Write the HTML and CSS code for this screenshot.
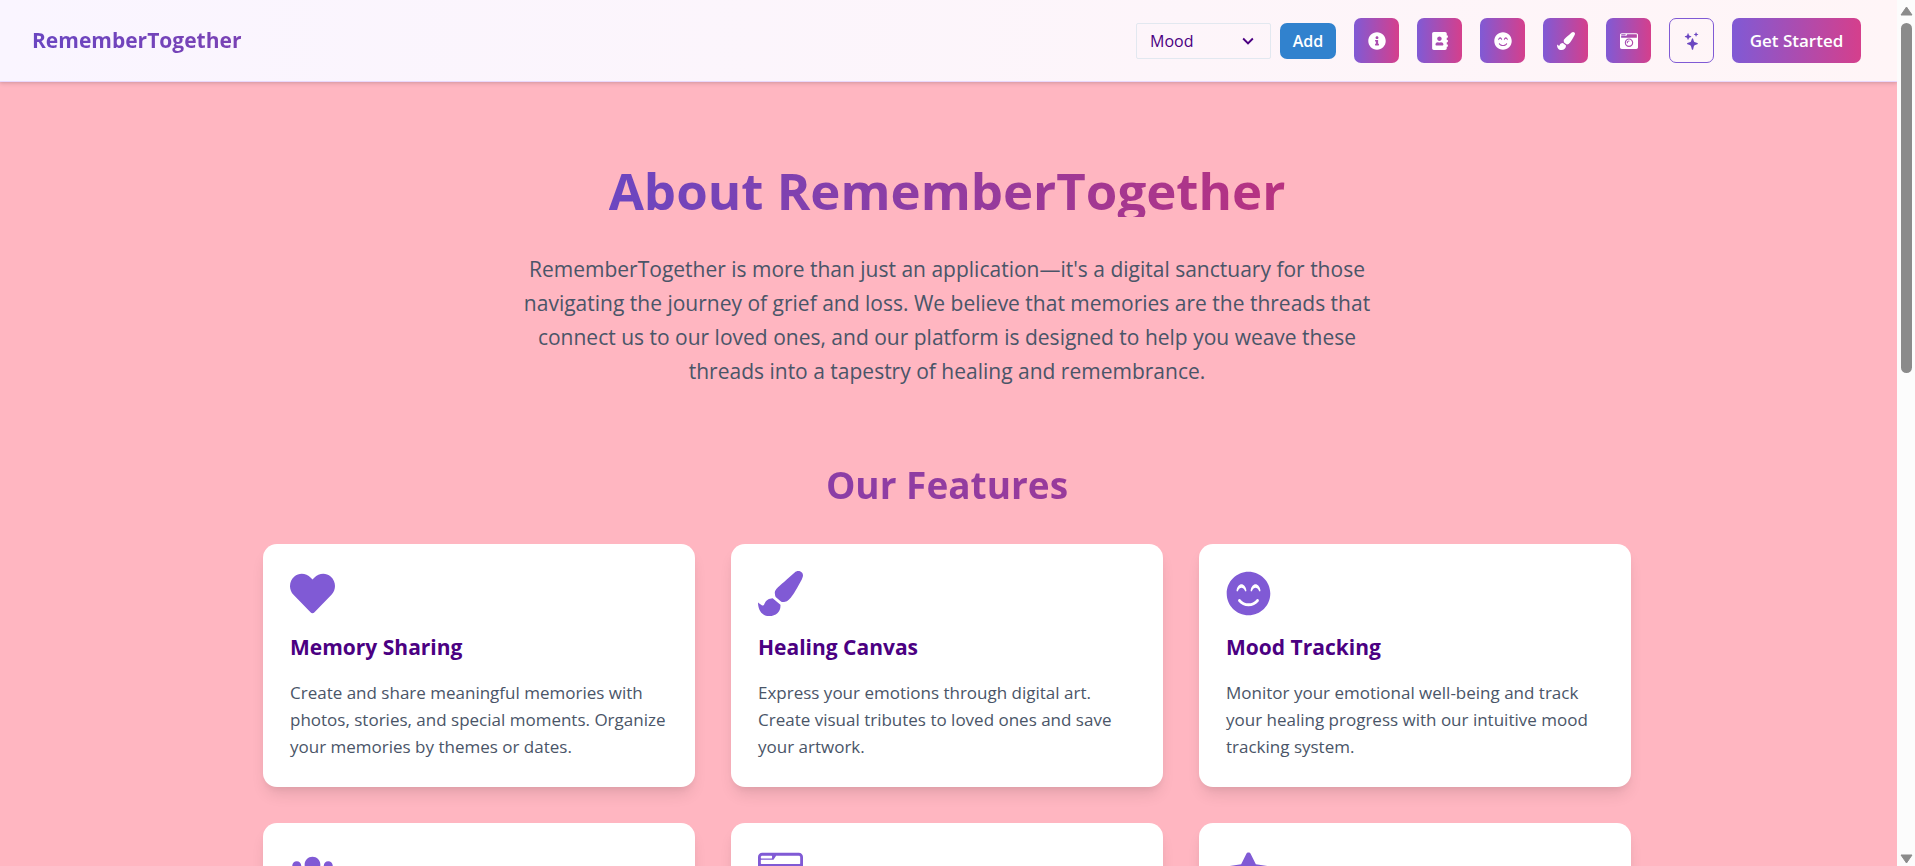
FILE: index.html
```html
<!DOCTYPE html>
<html lang="en">
<head>
<meta charset="utf-8">
<meta name="viewport" content="width=device-width, initial-scale=1">
<title>About RememberTogether</title>
<link rel="stylesheet" href="styles.css">
</head>
<body>
<svg class="sprite" aria-hidden="true">
  <symbol id="info" viewBox="0 0 512 512"><path d="M256 8C119.043 8 8 119.083 8 256c0 136.997 111.043 248 248 248s248-111.003 248-248C504 119.083 392.957 8 256 8zm0 110c23.196 0 42 18.804 42 42s-18.804 42-42 42-42-18.804-42-42 18.804-42 42-42zm56 254c0 6.627-5.373 12-12 12h-88c-6.627 0-12-5.373-12-12v-24c0-6.627 5.373-12 12-12h12v-64h-12c-6.627 0-12-5.373-12-12v-24c0-6.627 5.373-12 12-12h64c6.627 0 12 5.373 12 12v100h12c6.627 0 12 5.373 12 12v24z"/></symbol>
  <symbol id="contacts" viewBox="0 0 448 512"><path d="M436 160c6.6 0 12-5.4 12-12v-40c0-6.6-5.4-12-12-12h-20V48c0-26.5-21.5-48-48-48H48C21.5 0 0 21.5 0 48v416c0 26.5 21.5 48 48 48h320c26.5 0 48-21.5 48-48v-48h20c6.6 0 12-5.4 12-12v-40c0-6.6-5.4-12-12-12h-20v-64h20c6.6 0 12-5.4 12-12v-40c0-6.6-5.4-12-12-12h-20v-64h20zm-228-32c35.3 0 64 28.7 64 64s-28.7 64-64 64-64-28.7-64-64 28.7-64 64-64zm112 236.8c0 10.6-10 19.2-22.4 19.2H118.4C106 384 96 375.4 96 364.8v-19.2c0-31.8 30.1-57.6 67.2-57.6h5c12.3 5.1 25.7 8 39.8 8s27.6-2.9 39.8-8h5c37.1 0 67.2 25.8 67.2 57.6v19.2z"/></symbol>
  <symbol id="smile" viewBox="0 0 496 512"><path d="M248 8C111 8 0 119 0 256s111 248 248 248 248-111 248-248S385 8 248 8zM112 223.4c3.3-42.1 32.2-71.4 56-71.4s52.7 29.3 56 71.4c.7 8.6-10.8 11.9-14.9 4.5l-9.5-17c-7.7-13.7-19.2-21.6-31.5-21.6s-23.8 7.9-31.5 21.6l-9.5 17c-4.3 7.4-15.8 4-15.1-4.5zm250.8 122.8C334.3 380.4 292.5 400 248 400s-86.3-19.6-114.8-53.8c-13.6-16.3 11-36.7 24.6-20.5 22.4 26.9 55.2 42.2 90.2 42.2s67.8-15.4 90.2-42.2c13.4-16.2 38.1 4.2 24.6 20.5zm6.2-118.3l-9.5-17c-7.7-13.7-19.2-21.6-31.5-21.6s-23.8 7.9-31.5 21.6l-9.5 17c-4.1 7.3-15.6 4-14.9-4.5 3.3-42.1 32.2-71.4 56-71.4s52.7 29.3 56 71.4c.6 8.6-11 11.9-15.1 4.5z"/></symbol>
  <symbol id="brush" viewBox="0 0 512 512"><path d="M167.02 309.34c-40.12 2.58-76.53 17.86-97.19 72.3-2.35 6.21-8 9.98-14.59 9.98-11.11 0-45.46-27.67-55.25-34.35C0 439.62 37.93 512 128 512c75.86 0 128-43.77 128-120.19 0-3.11-.65-6.08-.97-9.13l-88.01-73.34zM457.89 0c-15.16 0-29.37 6.71-40.21 16.45C213.27 199.05 192 203.34 192 257.09c0 13.7 3.25 26.76 8.73 38.7l63.82 53.18c7.21 1.8 14.64 3.03 22.39 3.03 62.11 0 98.11-45.47 211.16-256.46 7.38-14.35 13.9-29.85 13.9-45.99C512 20.64 486 0 457.89 0z"/></symbol>
  <symbol id="camera" viewBox="0 0 512 512"><path d="M48 32C21.5 32 0 53.5 0 80v352c0 26.5 21.5 48 48 48h416c26.5 0 48-21.5 48-48V80c0-26.5-21.5-48-48-48H48zm0 32h106c3.3 0 6 2.7 6 6v20c0 3.3-2.7 6-6 6H38c-3.3 0-6-2.7-6-6V80c0-8.8 7.2-16 16-16zm426 96H38c-3.3 0-6-2.7-6-6v-36c0-3.3 2.7-6 6-6h138l30.2-45.3c1.1-1.7 3-2.7 5-2.7H464c8.8 0 16 7.2 16 16v74c0 3.3-2.7 6-6 6zM256 424c-66.2 0-120-53.8-120-120s53.8-120 120-120 120 53.8 120 120-53.8 120-120 120zm0-208c-48.5 0-88 39.5-88 88s39.5 88 88 88 88-39.5 88-88-39.5-88-88-88zm-48 104c-8.8 0-16-7.2-16-16 0-35.3 28.7-64 64-64 8.8 0 16 7.2 16 16s-7.2 16-16 16c-17.6 0-32 14.4-32 32 0 8.8-7.2 16-16 16z"/></symbol>
  <symbol id="sparkles" viewBox="0 0 18 18"><path d="M9.500 6.200c.3 0 .5.200.6.500l.7 2.200c.2.700.7 1.200 1.400 1.400l2.200.8c.6.200.6 1 0 1.200l-2.200.8c-.7.200-1.200.7-1.400 1.400l-.7 2.900c-.2.600-1 .6-1.200 0l-.8-2.900c-.2-.7-.7-1.200-1.400-1.400l-2.200-.8c-.6-.2-.6-1 0-1.200l2.200-.8c.7-.2 1.200-.7 1.400-1.400l.8-2.200c.1-.3.3-.5.600-.5zM5 1.200c.2 0 .3.100.4.300l.5 1.400c.1.400.4.700.8.800l1.400.5c.3.100.3.600 0 .7l-1.400.5c-.4.100-.7.400-.8.800l-.5 1.400c-.1.300-.6.300-.7 0l-.5-1.400c-.1-.4-.4-.7-.8-.8L2 4.900c-.3-.1-.3-.6 0-.7l1.400-.5c.4-.1.7-.4.800-.8l.5-1.400c0-.2.100-.3.300-.3zM13 .2c.1 0 .2.100.3.200l.3.900c.1.300.3.500.6.600l.9.300c.2.100.2.400 0 .5l-.9.300c-.3.100-.5.300-.6.600l-.3.900c-.1.200-.4.200-.5 0l-.3-.9c-.1-.3-.3-.5-.6-.6l-.9-.3c-.2-.1-.2-.4 0-.5l.9-.3c.3-.1.500-.3.600-.6l.3-.9c0-.1.100-.2.200-.2z"/></symbol>
  <symbol id="heart" viewBox="0 0 512 512"><path d="M462.3 62.6C407.5 15.9 326 24.3 275.7 76.2L256 96.5l-19.7-20.3C186.1 24.3 104.5 15.9 49.7 62.6c-62.8 53.6-66.1 149.8-9.9 207.9l193.5 199.8c12.5 12.9 32.8 12.9 45.3 0l193.5-199.8c56.3-58.1 53-154.3-9.8-207.9z"/></symbol>
  <symbol id="users" viewBox="0 0 640 512"><path d="M96 224c35.3 0 64-28.7 64-64s-28.7-64-64-64-64 28.7-64 64 28.7 64 64 64zm448 0c35.3 0 64-28.7 64-64s-28.7-64-64-64-64 28.7-64 64 28.7 64 64 64zm32 32h-64c-17.6 0-33.5 7.1-45.1 18.6 40.3 22.1 68.9 62 75.1 109.4h66c17.7 0 32-14.3 32-32v-32c0-35.3-28.7-64-64-64zm-256 0c61.9 0 112-50.1 112-112S381.9 32 320 32 208 82.1 208 144s50.1 112 112 112zm76.8 32h-8.3c-20.8 10-43.9 16-68.5 16s-47.6-6-68.5-16h-8.3C179.6 288 128 339.6 128 403.2V432c0 26.5 21.5 48 48 48h288c26.5 0 48-21.5 48-48v-28.8c0-63.6-51.6-115.2-115.2-115.2zm-223.7-13.4C161.5 263.1 145.6 256 128 256H64c-35.3 0-64 28.7-64 64v32c0 17.7 14.3 32 32 32h65.9c6.3-47.4 34.9-87.3 75.2-109.4z"/></symbol>
  <symbol id="star" viewBox="0 0 576 512"><path d="M259.3 17.8L194 150.2 47.900 171.500c-26.200 3.800-36.700 36.100-17.700 54.600l105.700 103-25 145.500c-4.500 26.300 23.200 46 46.400 33.700L288 439.600l130.700 68.700c23.200 12.200 50.900-7.400 46.400-33.700l-25-145.500 105.700-103c19-18.500 8.500-50.800-17.700-54.600L382 150.200 316.700 17.800c-11.700-23.600-45.600-23.900-57.400 0z"/></symbol>
</svg>

<div class="shell">
  <div class="page">
    <header class="topbar">
      <a class="brand" href="#">RememberTogether</a>
      <nav class="actions" aria-label="Main">
        <form class="mood">
          <div class="picker">
            <select class="picker-field" aria-label="Mood">
              <option>Mood</option>
            </select>
            <svg class="picker-arrow" viewBox="0 0 24 24" aria-hidden="true"><path d="M16.59 8.590L12 13.170 7.410 8.590 6 10l6 6 6-6z"/></svg>
          </div>
          <button class="add" type="button">Add</button>
        </form>
        <button class="tool" type="button" aria-label="About"><svg class="icon"><use href="#info"/></svg></button>
        <button class="tool" type="button" aria-label="Contacts"><svg class="icon"><use href="#contacts"/></svg></button>
        <button class="tool" type="button" aria-label="Mood tracking"><svg class="icon"><use href="#smile"/></svg></button>
        <button class="tool" type="button" aria-label="Canvas"><svg class="icon"><use href="#brush"/></svg></button>
        <button class="tool" type="button" aria-label="Photos"><svg class="icon"><use href="#camera"/></svg></button>
        <button class="tool tool-outline" type="button" aria-label="Sparkles"><svg class="icon"><use href="#sparkles"/></svg></button>
        <button class="start" type="button">Get Started</button>
      </nav>
    </header>

    <main class="content">
      <section class="intro">
        <h1 class="title">About RememberTogether</h1>
        <p class="lead">RememberTogether is more than just an application—it's a digital sanctuary for those navigating the journey of grief and loss. We believe that memories are the threads that connect us to our loved ones, and our platform is designed to help you weave these threads into a tapestry of healing and remembrance.</p>
      </section>
      <section class="features">
        <h2 class="subtitle">Our Features</h2>
        <div class="cards">
          <article class="card">
            <svg class="card-icon" aria-hidden="true"><use href="#heart"/></svg>
            <h3 class="card-title">Memory Sharing</h3>
            <p class="card-text">Create and share meaningful memories with photos, stories, and special moments. Organize your memories by themes or dates.</p>
          </article>
          <article class="card">
            <svg class="card-icon" aria-hidden="true"><use href="#brush"/></svg>
            <h3 class="card-title">Healing Canvas</h3>
            <p class="card-text">Express your emotions through digital art. Create visual tributes to loved ones and save your artwork.</p>
          </article>
          <article class="card">
            <svg class="card-icon" aria-hidden="true"><use href="#smile"/></svg>
            <h3 class="card-title">Mood Tracking</h3>
            <p class="card-text">Monitor your emotional well-being and track your healing progress with our intuitive mood tracking system.</p>
          </article>
          <article class="card"><svg class="card-icon" aria-hidden="true"><use href="#users"/></svg></article>
          <article class="card"><svg class="card-icon" aria-hidden="true"><use href="#camera"/></svg></article>
          <article class="card"><svg class="card-icon" aria-hidden="true"><use href="#star"/></svg></article>
        </div>
      </section>
    </main>
  </div>
  <div class="scrollbar" aria-hidden="true">
    <svg class="scroll-arrow" viewBox="0 0 13 10"><path d="M6.500 1 12 9H1z"/></svg>
    <div class="scroll-track"><div class="scroll-thumb"></div></div>
    <svg class="scroll-arrow" viewBox="0 0 13 10"><path d="M6.500 9 12 1H1z"/></svg>
  </div>
</div>
</body>
</html>
```

FILE: styles.css
```css
*,
*::before,
*::after {
  box-sizing: border-box;
}

body {
  margin: 0;
  background: #ffb6c1;
  color: #4a5568;
  font-family: "Open Sans", "Noto Sans", sans-serif;
  font-size: 17px;
  line-height: 27px;
}

h1, h2, h3, p {
  margin: 0;
}

button, select {
  font-family: inherit;
}

.sprite {
  display: none;
}

.shell {
  display: flex;
  height: 100vh;
  overflow: hidden;
}

.page {
  flex: 1;
  min-width: 0;
  overflow: hidden;
}

/* Top bar */
.topbar {
  display: flex;
  align-items: center;
  gap: 18px;
  padding: 18px 36px 18px 32px;
  background: linear-gradient(to right, #faf5ff, #fff5f7);
  border-bottom: 1px solid #e9d8fd;
  box-shadow: 0 2px 4px rgba(0, 0, 0, 0.1), 0 1px 2px rgba(0, 0, 0, 0.06);
}

.brand {
  flex: 1;
  background: linear-gradient(to right, #6b46c1, #b83280);
  -webkit-background-clip: text;
  background-clip: text;
  color: transparent;
  font-size: 21px;
  font-weight: 700;
  text-decoration: none;
}

.actions,
.mood {
  display: flex;
  align-items: center;
}

.actions {
  gap: 18px;
}

.mood {
  gap: 9px;
}

.picker {
  position: relative;
  width: 135px;
}

.picker-field {
  display: block;
  width: 100%;
  height: 36px;
  padding: 0 36px 0 13px;
  appearance: none;
  background: transparent;
  border: 1px solid #e2e8f0;
  border-radius: 2px;
  color: #4b0082;
  font-size: 16px;
}

.picker-arrow {
  position: absolute;
  top: 7px;
  right: 12px;
  width: 22px;
  height: 22px;
  fill: #4b0082;
  pointer-events: none;
}

.add,
.tool,
.start {
  display: flex;
  align-items: center;
  justify-content: center;
  padding: 0;
  border: 0;
  border-radius: 7px;
  color: #fff;
  font-weight: 600;
}

.add {
  width: 56px;
  height: 36px;
  background: #3182ce;
  font-size: 16px;
}

.tool,
.start {
  height: 45px;
  background: linear-gradient(to right, #805ad5, #d53f8c);
}

.tool {
  width: 45px;
}

.tool-outline {
  background: transparent;
  border: 1px solid #805ad5;
  color: #6b46c1;
}

.start {
  width: 129px;
  font-size: 17px;
}

.icon {
  width: 18px;
  height: 18px;
  fill: currentColor;
}

/* Main content */
.content {
  display: flex;
  flex-direction: column;
  gap: 73px;
  max-width: 1443px;
  margin: 0 auto;
  padding: 81px 39px 81px 36px;
}

.intro {
  display: flex;
  flex-direction: column;
  align-items: center;
  gap: 35px;
}

.title,
.subtitle {
  background: linear-gradient(to right, #6b46c1, #b83280);
  -webkit-background-clip: text;
  background-clip: text;
  color: transparent;
  font-weight: 700;
  text-align: center;
}

.title {
  font-size: 51px;
  line-height: 54px;
}

.lead {
  max-width: 864px;
  font-size: 21px;
  line-height: 34px;
  text-align: center;
}

.subtitle {
  margin-bottom: 35px;
  font-size: 37px;
  line-height: 48px;
}

.cards {
  display: grid;
  grid-template-columns: repeat(3, 1fr);
  gap: 36px;
}

.card {
  min-height: 243px;
  padding: 27px;
  background: #fff;
  border-radius: 14px;
  box-shadow: 0 10px 15px -3px rgba(0, 0, 0, 0.1), 0 4px 6px -2px rgba(0, 0, 0, 0.05);
}

.card-icon {
  display: block;
  width: 45px;
  height: 45px;
  margin-bottom: 18px;
  fill: #805ad5;
}

.card-title {
  margin-bottom: 18px;
  color: #4b0082;
  font-size: 21px;
  font-weight: 700;
  line-height: 27px;
}

/* Scrollbar */
.scrollbar {
  display: flex;
  flex-direction: column;
  align-items: center;
  gap: 7px;
  width: 18px;
  padding: 6px 0 2px;
  background: #fcfcfc;
}

.scroll-arrow {
  width: 13px;
  height: 10px;
  fill: #8b8b8b;
  stroke: #8b8b8b;
  stroke-linejoin: round;
}

.scroll-track {
  flex: 1;
}

.scroll-thumb {
  width: 11px;
  height: 42.5%;
  border-radius: 6px;
  background: #8b8b8b;
}
```
